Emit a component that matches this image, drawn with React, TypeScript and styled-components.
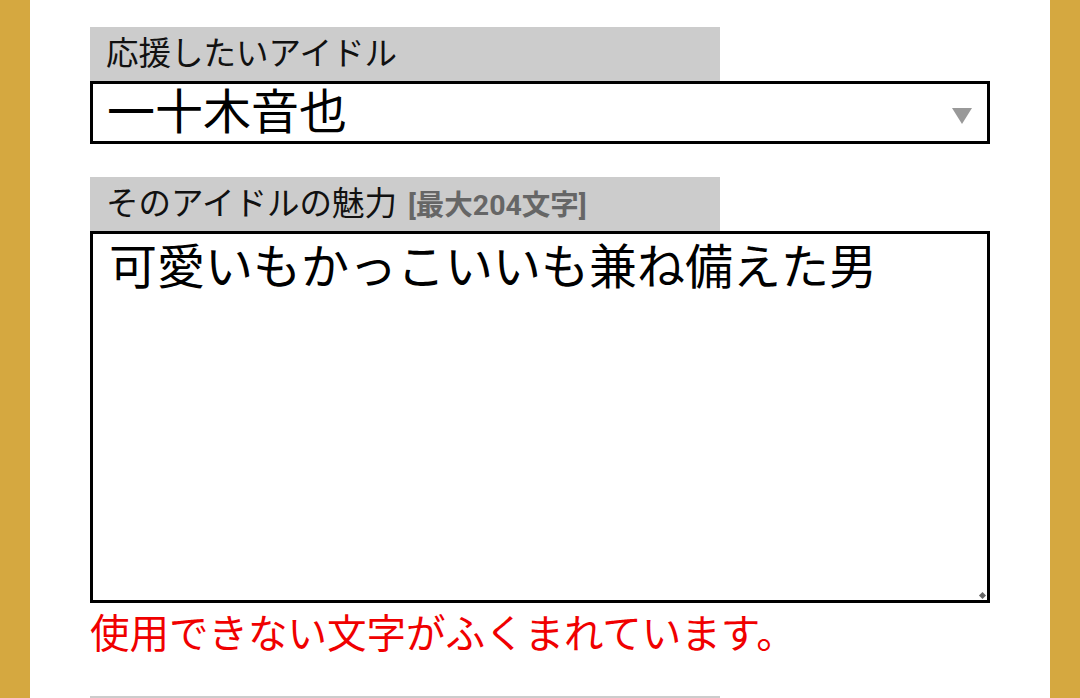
import { FC } from "react";
import styled, { createGlobalStyle } from "styled-components";

const GlobalStyle = createGlobalStyle`
    html, body {
        margin: 0;
        padding: 0;
        background-color: #d5a840;
        font-family: Roboto, "Noto Sans CJK JP", sans-serif;
    }
    * {
        box-sizing: border-box;
    }
`;

const Page = styled.div`
    margin: 0 30px;
    min-height: 698px;
    background-color: #fff;
    padding: 27px 60px 0;
`;

const Field = styled.div`
    display: flex;
    flex-direction: column;
    margin-bottom: 33px;
`;

const Label = styled.div`
    width: 630px;
    height: 54px;
    background-color: #cccccc;
    padding: 0 0 0 16px;
    display: flex;
    align-items: center;
    font-size: 32.5px;
    color: #111;
    line-height: 1;
`;

const Note = styled.span`
    margin-left: 11px;
    font-size: 28.5px;
    font-weight: bold;
    color: #666;
    position: relative;
    top: 2px;
`;

const SelectWrap = styled.div`
    position: relative;
    width: 900px;
    height: 63px;
`;

const Select = styled.select`
    appearance: none;
    width: 100%;
    height: 100%;
    border: 3px solid #000;
    border-radius: 0;
    background: #fff;
    padding: 0 0 0 14px;
    font-family: Roboto, "Noto Sans CJK JP", sans-serif;
    font-size: 48px;
    color: #000;
    outline: none;
`;

const Arrow = styled.svg`
    position: absolute;
    right: 18px;
    top: 27px;
    pointer-events: none;
`;

const TextBox = styled.div`
    position: relative;
    width: 900px;
    height: 372px;
`;

const TextArea = styled.textarea`
    width: 100%;
    height: 100%;
    border: 3px solid #000;
    border-radius: 0;
    padding: 3px 16px;
    font-family: Roboto, "Noto Sans CJK JP", sans-serif;
    font-size: 48px;
    line-height: 62px;
    color: #000;
    outline: none;
    display: block;
    resize: none;
`;

const Grip = styled.span`
    position: absolute;
    right: 5px;
    bottom: 5px;
    width: 5px;
    height: 5px;
    background: #666;
    transform: rotate(45deg);
    pointer-events: none;
`;

const ErrorText = styled.p`
    margin: 4px 0 0;
    font-size: 39.5px;
    line-height: 56px;
    color: #f00000;
`;

const App: FC = () => {
    return (
        <>
            <GlobalStyle />
            <Page>
                <Field>
                    <Label>応援したいアイドル</Label>
                    <SelectWrap>
                        <Select defaultValue="otoya">
                            <option value="otoya">一十木音也</option>
                        </Select>
                        <Arrow width="20" height="16" viewBox="0 0 20 16">
                            <polygon points="0,0 20,0 10,16" fill="#999" />
                        </Arrow>
                    </SelectWrap>
                </Field>
                <Field>
                    <Label>
                        そのアイドルの魅力<Note>[最大204文字]</Note>
                    </Label>
                    <TextBox>
                        <TextArea defaultValue="可愛いもかっこいいも兼ね備えた男" />
                        <Grip />
                    </TextBox>
                    <ErrorText>使用できない文字がふくまれています。</ErrorText>
                </Field>
                <Field>
                    <Label />
                </Field>
            </Page>
        </>
    );
};

export default App;
